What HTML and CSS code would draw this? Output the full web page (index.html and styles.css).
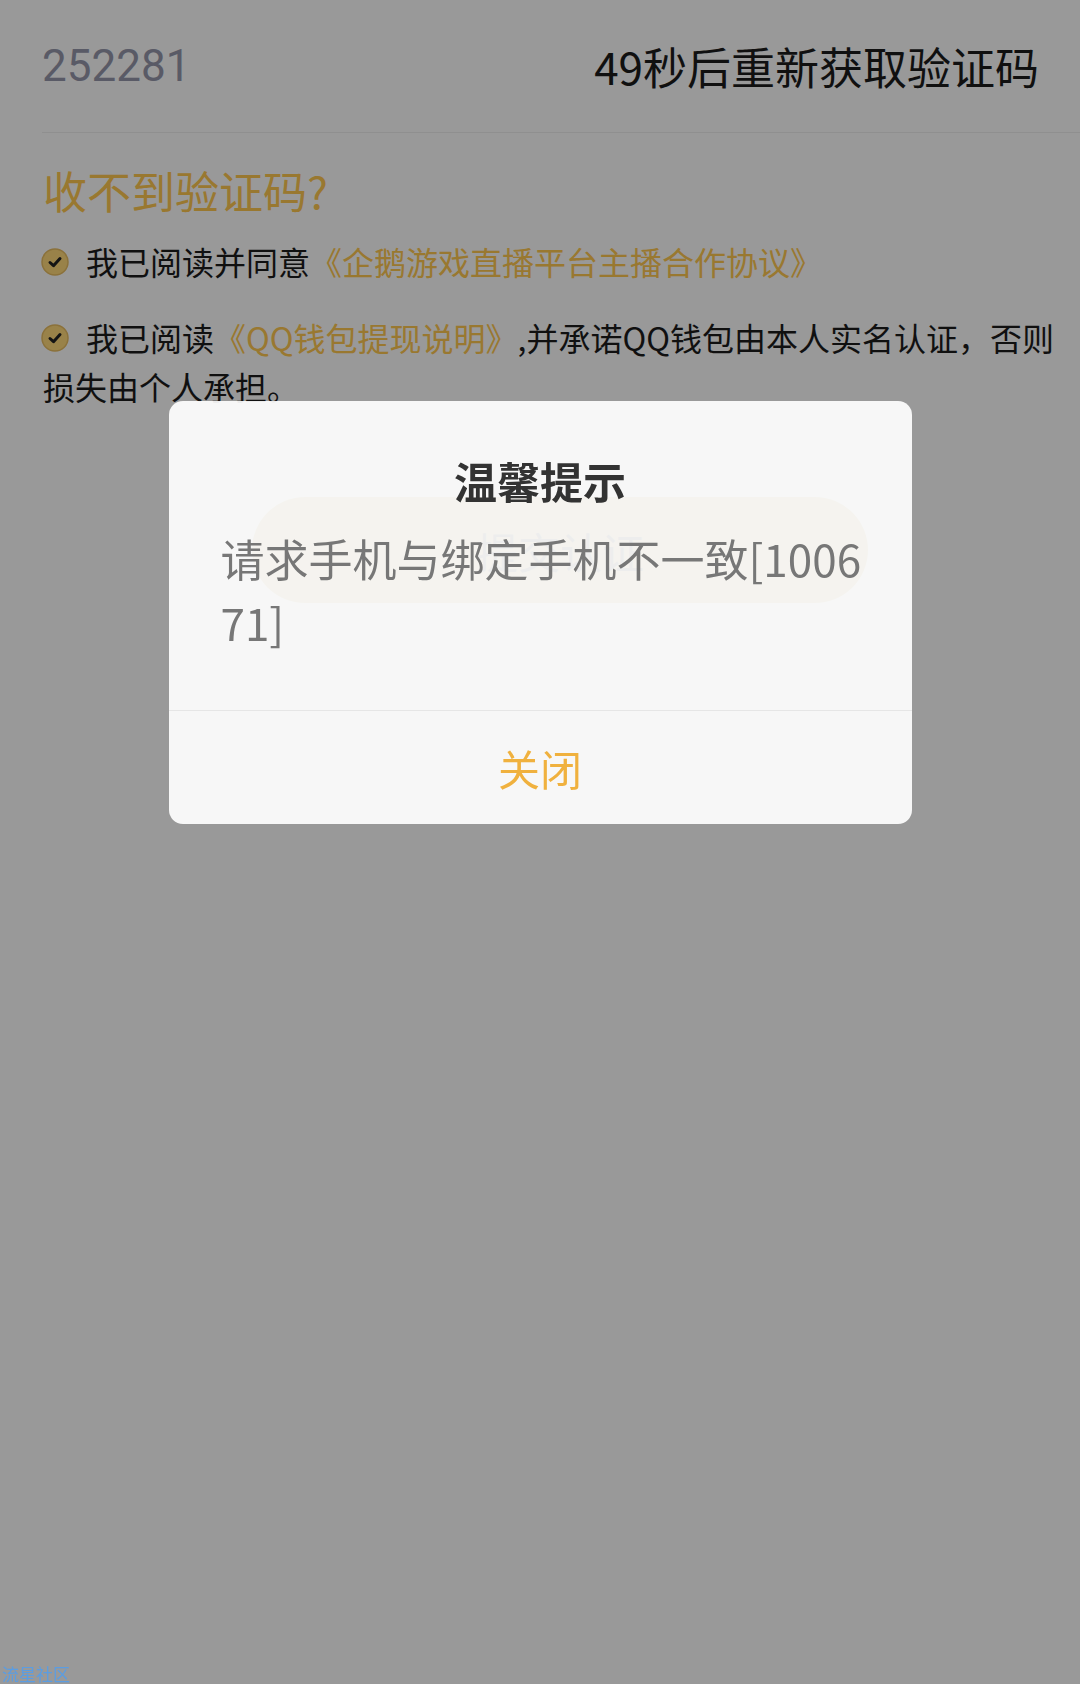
FILE: index.html
```html
<!DOCTYPE html>
<html lang="zh-CN">
<head>
  <meta charset="UTF-8">
  <meta name="viewport" content="width=device-width, initial-scale=1.0">
  <title>提现认证</title>
  <link rel="stylesheet" href="styles.css">
</head>
<body>

  <main class="page">
    <div class="code-row">
      <span class="code">252281</span>
      <span class="resend">49秒后重新获取验证码</span>
    </div>

    <section class="content">
      <h2 class="help">收不到验证码?</h2>
      <p class="agree">
        <svg class="check" viewBox="0 0 28 28"><circle cx="14" cy="14" r="13" /><path d="M9 14.5l3.5 3.2L19 10.5" /></svg>我已阅读并同意<a class="link">《企鹅游戏直播平台主播合作协议》</a>
      </p>
      <p class="agree">
        <svg class="check" viewBox="0 0 28 28"><circle cx="14" cy="14" r="13" /><path d="M9 14.5l3.5 3.2L19 10.5" /></svg>我已阅读<a class="link">《QQ钱包提现说明》</a>,并承诺QQ钱包由本人实名认证，否则损失由个人承担。
      </p>
      <button class="submit">提交认证</button>
    </section>
  </main>

  <!-- 弹窗 -->
  <div class="mask">
    <div class="dialog">
      <h3 class="dialog-title">温馨提示</h3>
      <p class="dialog-msg">请求手机与绑定手机不一致[100671]</p>
      <div class="dialog-btns">
        <button class="dialog-close">关闭</button>
      </div>
    </div>
  </div>

  <div class="watermark">流星社区</div>

</body>
</html>
```

FILE: styles.css
```css
:root {
  --dourado: #ffc850;
  --texto: #1c1c1c;
}
body {
  margin: 0;
  padding: 0;
  background-color: #ffffff;
  font-family: "Noto Sans CJK SC", "Noto Sans", sans-serif;
  color: var(--texto);
}
.page {
  min-height: 100vh;
}
.code-row {
  margin-left: 42px;
  padding-right: 41px;
  height: 132px;
  border-bottom: 1px solid #eeeeee;
  display: flex;
  align-items: center;
  justify-content: space-between;
}
.code {
  font-family: Roboto, "Noto Sans", sans-serif;
  font-size: 44px;
  color: #9597ab;
}
.resend {
  font-size: 44px;
  line-height: 60px;
  color: var(--texto);
}
.content {
  padding: 0 18px 0 43px;
}
.help {
  margin: 27px 0 17px;
  font-size: 44px;
  font-weight: normal;
  line-height: 60px;
  color: var(--dourado);
}
.agree {
  margin: 0 0 27px;
  font-size: 32px;
  line-height: 49px;
}
.link {
  color: var(--dourado);
  text-decoration: none;
}
.check {
  width: 28px;
  height: 28px;
  margin: 0 17px 0 -2px;
  vertical-align: -1px;
}
.check circle {
  fill: #ffd97a;
  stroke: #e8bd62;
  stroke-width: 1.5;
}
.check path {
  fill: none;
  stroke: #222222;
  stroke-width: 3;
  stroke-linecap: round;
  stroke-linejoin: round;
}
.submit {
  display: block;
  width: 616px;
  height: 106px;
  margin: 86px 0 0 209px;
  border: none;
  border-radius: 53px;
  background-color: #c5af5c;
  color: #333333;
  font-family: inherit;
  font-size: 42px;
}
.mask {
  position: fixed;
  top: 0;
  left: 0;
  right: 0;
  bottom: 0;
  padding-top: 401px;
  background-color: rgba(0, 0, 0, 0.4);
}
.dialog {
  width: 743px;
  margin: 0 auto;
  border-radius: 14px;
  background-color: rgba(255, 255, 255, 0.92);
  overflow: hidden;
}
.dialog-title {
  margin: 0;
  padding-top: 50px;
  font-size: 43px;
  font-weight: bold;
  line-height: 58px;
  text-align: center;
  color: #333333;
}
.dialog-msg {
  margin: 17px 0 0;
  padding: 0 40px 56px 52px;
  font-size: 44px;
  line-height: 64px;
  color: #777777;
  word-break: break-all;
}
.dialog-btns {
  border-top: 1px solid #e6e6e6;
}
.dialog-close {
  display: block;
  width: 100%;
  height: 113px;
  border: none;
  background: none;
  font-family: inherit;
  font-size: 42px;
  color: #f0b13e;
}
.watermark {
  position: fixed;
  left: 2px;
  bottom: 0;
  font-size: 17px;
  line-height: 20px;
  color: #5b9de2;
}
```
